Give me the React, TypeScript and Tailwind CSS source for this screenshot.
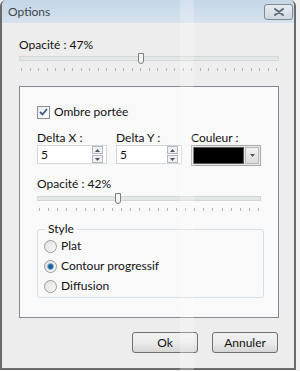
import React from "react";

const font = { fontFamily: 'Lato, "Open Sans", sans-serif' };

function Ticks({ count }: { count: number }) {
  return (
    <div className="flex justify-between px-[2px]">
      {Array.from({ length: count }).map((_, i) => (
        <div key={i} className="w-px h-[3px] bg-[#b5b5b5]" />
      ))}
    </div>
  );
}

function Slider({ pos, ticks }: { pos: number; ticks: number }) {
  return (
    <div className="flex flex-col gap-[4px]">
      <div className="relative h-[11px] flex items-center">
        <div className="w-full h-[5px] bg-[#e3e6e6] border border-[#d3d6d6]" />
        <div
          className="absolute top-0 w-[6px] h-[11px] bg-[#f4f4f4] border border-[#7e7e7e] rounded-b-[3px]"
          style={{ left: pos }}
        />
      </div>
      <Ticks count={ticks} />
    </div>
  );
}

function Spinner() {
  return (
    <div className="flex flex-col gap-px">
      <div className="w-[11px] h-[8px] border border-[#b4b8bd] bg-[#eef0f2] flex items-center justify-center">
        <svg width="5" height="3" viewBox="0 0 5 3"><path d="M0 3L2.5 0L5 3Z" fill="#4a5560" /></svg>
      </div>
      <div className="w-[11px] h-[8px] border border-[#b4b8bd] bg-[#eef0f2] flex items-center justify-center">
        <svg width="5" height="3" viewBox="0 0 5 3"><path d="M0 0L2.5 3L5 0Z" fill="#4a5560" /></svg>
      </div>
    </div>
  );
}

function NumField({ w }: { w: string }) {
  return (
    <div className={`${w} h-[19px] border border-[#d4d7da] bg-white flex items-center pl-[3px] pr-[3px]`}>
      <span className="flex-1 text-[12px] text-[#111]">5</span>
      <Spinner />
    </div>
  );
}

function Radio({ checked, label }: { checked?: boolean; label: string }) {
  return (
    <div className="flex items-center gap-[4px] h-[20px]">
      <div className="w-[13px] h-[13px] rounded-full border border-[#9a9a9a] bg-gradient-to-br from-[#e2e2e2] to-[#fafafa] flex items-center justify-center">
        {checked && <div className="w-[7px] h-[7px] rounded-full bg-gradient-to-br from-[#2a6fa8] to-[#1b4f7e] border border-[#6fa6cf]" />}
      </div>
      <span className="text-[12px] leading-[16px] text-[#111]">{label}</span>
    </div>
  );
}

export default function App() {
  return (
    <div className="w-[300px] h-[371px] bg-[#f2f2f2] relative overflow-hidden" style={font}>
      <div className="w-[296px] h-[370px] border-l-2 border-r-2 border-b-2 border-[#6b6b6b] rounded-t-[6px] flex flex-col bg-[#ededed]">
        {/* Title bar */}
        <div className="h-[23px] flex items-center justify-between pl-[6px] pr-[1px] bg-gradient-to-b from-[#c5d6e8] to-[#d6e2ee] rounded-t-[5px]">
          <span className="text-[12px] text-[#3f464d]">Options</span>
          <div className="w-[29px] h-[16px] mt-[1px] rounded-[3px] border border-[#7d8a96] bg-gradient-to-b from-[#e6ebf0] to-[#cfd8e0] flex items-center justify-center">
            <svg width="10" height="8" viewBox="0 0 10 8">
              <path d="M1 1L9 7M9 1L1 7" stroke="#5f6a73" strokeWidth="2" strokeLinecap="round" />
            </svg>
          </div>
        </div>
        {/* Body */}
        <div className="flex flex-col pl-[17px] pr-[15px] pt-[14px]">
          <span className="text-[12px] leading-[16px] text-[#111]">Opacité : 47%</span>
          <Slider pos={119} ticks={31} />
          <div className="mt-[15px] h-[232px] border border-[#828790] bg-[#f9f9f9] flex flex-col pl-[17px] pr-[17px] pt-[17px]">
            <div className="flex items-center gap-[4px] h-[16px]">
              <div className="w-[13px] h-[13px] border border-[#8f8f8f] bg-gradient-to-br from-[#e8eef4] to-[#fdfdfd] flex items-center justify-center">
                <svg width="9" height="8" viewBox="0 0 9 8"><path d="M1 4L3.5 6.5L8 1" stroke="#3f5c84" strokeWidth="1.8" fill="none" /></svg>
              </div>
              <span className="text-[12px] leading-[16px] text-[#111]">Ombre portée</span>
            </div>
            <div className="mt-[11px] flex gap-[9px]">
              <div className="flex flex-col">
                <span className="text-[12px] leading-[14px] text-[#111]">Delta X :</span>
                <NumField w="w-[70px]" />
              </div>
              <div className="flex flex-col">
                <span className="text-[12px] leading-[14px] text-[#111]">Delta Y :</span>
                <NumField w="w-[66px]" />
              </div>
              <div className="flex flex-col">
                <span className="text-[12px] leading-[14px] text-[#111]">Couleur :</span>
                <div className="w-[70px] h-[21px] border border-[#a8a8a8] bg-[#e8e8e8] flex items-center p-[1px] gap-[1px]">
                  <div className="flex-1 h-full bg-black border border-[#555]" />
                  <div className="w-[14px] h-full border border-[#b8b8b8] bg-gradient-to-b from-[#f2f2f2] to-[#dcdcdc] flex items-center justify-center">
                    <svg width="5" height="3" viewBox="0 0 5 3"><path d="M0 0L2.5 3L5 0Z" fill="#4a5560" /></svg>
                  </div>
                </div>
              </div>
            </div>
            <span className="mt-[10px] text-[12px] leading-[16px] text-[#111]">Opacité : 42%</span>
            <div className="mt-[1px] w-[224px]">
              <Slider pos={78} ticks={25} />
            </div>
            <div className="mt-[18px] relative w-[227px] h-[69px] border border-[#d5dfe5] rounded-[3px] flex flex-col pl-[6px] pt-[6px]">
              <span className="absolute -top-[9px] left-[7px] px-[3px] bg-[#f9f9f9] text-[12px] leading-[16px] text-[#111]">Style</span>
              <Radio label="Plat" />
              <Radio label="Contour progressif" checked />
              <Radio label="Diffusion" />
            </div>
          </div>
          <div className="mt-[14px] flex justify-end gap-[14px] pr-[1px]">
            <div className="w-[66px] h-[21px] rounded-[3px] border border-[#707070] bg-gradient-to-b from-[#f2f2f2] via-[#ebebeb] to-[#d6d6d6] flex items-center justify-center text-[12px] text-[#111]">Ok</div>
            <div className="w-[66px] h-[21px] rounded-[3px] border border-[#707070] bg-gradient-to-b from-[#f2f2f2] via-[#ebebeb] to-[#d6d6d6] flex items-center justify-center text-[12px] text-[#111]">Annuler</div>
          </div>
        </div>
      </div>
      <div className="absolute top-0 bottom-0 left-[180px] w-[14px] bg-white/25 pointer-events-none" />
    </div>
  );
}
